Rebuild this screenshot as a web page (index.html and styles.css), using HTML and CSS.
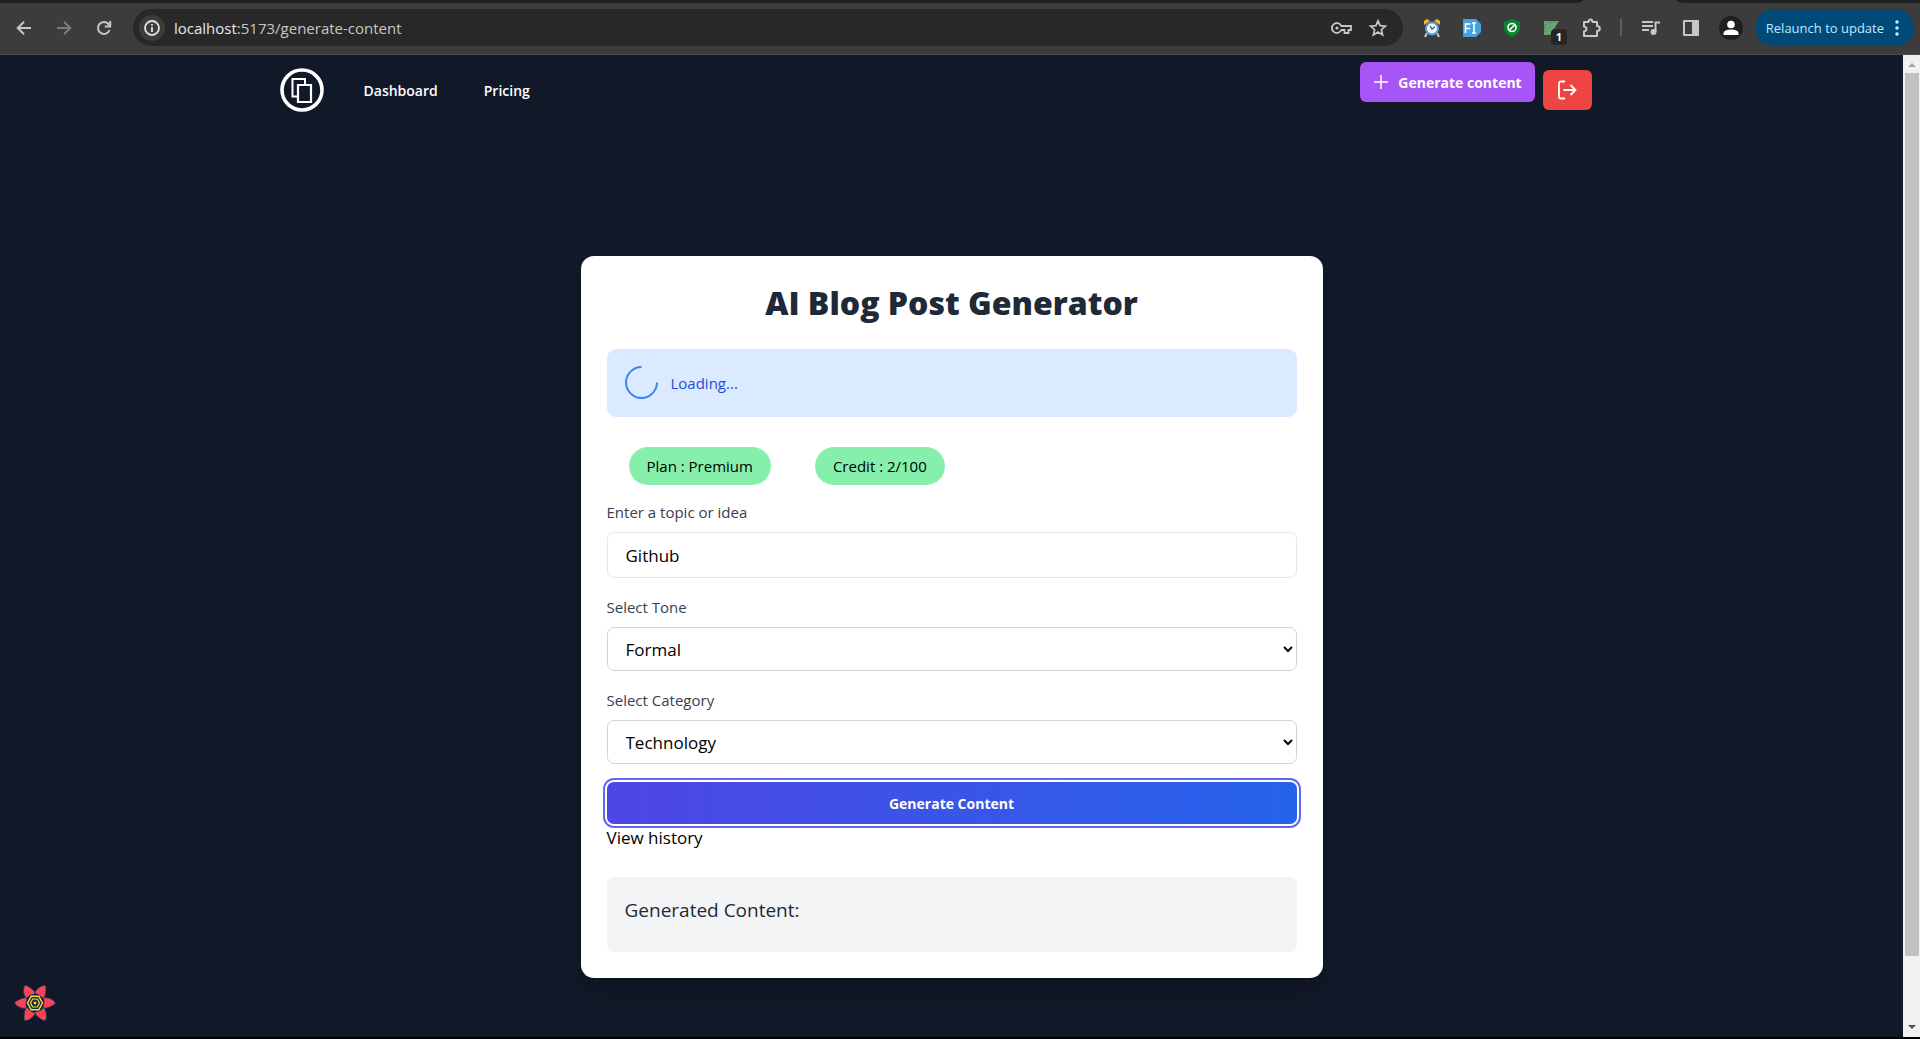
FILE: index.html
```html
<!DOCTYPE html>
<html lang="en">
<head>
<meta charset="utf-8">
<title>AI Blog Post Generator</title>
<link rel="stylesheet" href="styles.css">
</head>
<body>
<div class="tabstrip"><span class="tabstrip-left"></span><span class="tabstrip-right"></span></div>
<header class="toolbar">
  <button class="tool" aria-label="Back"><svg width="20" height="20" viewBox="0 0 20 20" fill="none" stroke="#c7c7c7" stroke-width="2"><path d="M17 10H4M10 3.700L3.700 10L10 16.300"/></svg></button>
  <button class="tool" aria-label="Forward"><svg width="20" height="20" viewBox="0 0 20 20" fill="none" stroke="#7c7c7c" stroke-width="2"><path d="M3 10H16M10 3.700L16.300 10L10 16.300"/></svg></button>
  <button class="tool" aria-label="Reload"><svg width="20" height="20" viewBox="0 0 20 20" fill="none" stroke="#c7c7c7" stroke-width="2"><path d="M15.600 12A6 6 0 1 1 14.500 6L16 7.800M16.200 3V8.400H10.800"/></svg></button>
  <div class="omnibox">
    <button class="site-info" aria-label="Site information"><svg width="18" height="18" viewBox="0 0 18 18" fill="none" stroke="#e3e3e3" stroke-width="1.800"><circle cx="9" cy="9" r="7"/><path d="M9 8V13M9 5V6.800"/></svg></button>
    <div class="url"><span class="host">localhost</span>:5173/generate-content</div>
    <button class="tool tool-key" aria-label="Passwords"><svg width="22" height="14" viewBox="0 0 22 14" fill="none" stroke="#c7c7c7" stroke-width="1.800"><path d="M10.300 5A4.900 4.900 0 1 0 10.300 9H13.500V12H17.500V9H20V5Z"/><circle cx="6" cy="7" r="1.600" fill="#c7c7c7" stroke="none"/></svg></button>
    <button class="tool" aria-label="Bookmark"><svg width="20" height="20" viewBox="0 0 20 20" fill="none" stroke="#c7c7c7" stroke-width="1.700"><path d="M10 2.800L12.100 7.700L17.400 8.200L13.400 11.700L14.600 16.900L10 14.100L5.400 16.900L6.600 11.700L2.600 8.200L7.900 7.700Z"/></svg></button>
  </div>
  <div class="extensions">
    <button class="tool" aria-label="Alarm clock"><svg width="20" height="20" viewBox="0 0 20 20"><path d="M5 15L3 19M15 15L17 19" stroke="#c9ccd0" stroke-width="2"/><path d="M2 7L2 3L5 1L8 3ZM18 7V3L15 1L12 3Z" fill="#f6b62d"/><circle cx="10" cy="10.500" r="7" fill="#5e9bd8"/><circle cx="10" cy="10.500" r="5" fill="#eef6ff"/><path d="M8 8L10 11L13 9" stroke="#4a5462" stroke-width="1.300" fill="none"/></svg></button>
    <button class="tool" aria-label="Form filler"><svg width="20" height="20" viewBox="0 0 20 20"><path d="M2 1H14L19 6V14L14 19H2Q1 19 1 18V2Q1 1 2 1Z" fill="#43a2e2"/><path d="M3.500 15V6H8.500M3.500 10.500H8M10 5H14M12 5V15M10 15H14" stroke="#fff" stroke-width="1.600" fill="none"/></svg></button>
    <button class="tool" aria-label="Ad blocker"><svg width="20" height="20" viewBox="0 0 20 20"><path d="M10 1L18 4V9Q18 16 10 19Q2 16 2 9V4Z" fill="#06852f"/><circle cx="10" cy="9.500" r="4" fill="none" stroke="#fff" stroke-width="1.600"/><path d="M7.200 12.300L12.800 6.700" stroke="#fff" stroke-width="1.600"/></svg></button>
    <button class="tool tool-badged" aria-label="Page ruler, 1 notice"><svg width="20" height="20" viewBox="0 0 20 20"><path d="M2 3H17L8 17H2Z" fill="#68a373"/><path d="M2 7H4M2 10H4M2 13H4M6 3V5M9 3V5M12 3V5" stroke="#4d8059"/></svg><span class="badge">1</span></button>
    <button class="tool" aria-label="Extensions"><svg width="22" height="20" viewBox="0 0 22 20" fill="none" stroke="#c7c7c7" stroke-width="2" stroke-linejoin="round"><path d="M3 4H7.500Q7.500 1.500 9.500 1.500T11.500 4H16V8Q18.800 8 18.800 10.500T16 13V18H3V13.500Q5.500 13 5.500 11T3 8.500Z"/></svg></button>
    <span class="divider"></span>
    <button class="tool" aria-label="Media controls"><svg width="20" height="20" viewBox="0 0 20 20" fill="none" stroke="#c7c7c7" stroke-width="2"><path d="M1 4H12M1 8H12M1 12H8M14.500 14V4.500H19"/><circle cx="12.500" cy="14" r="3" fill="#c7c7c7" stroke="none"/></svg></button>
    <button class="tool tool-panel" aria-label="Side panel"><svg width="20" height="20" viewBox="0 0 20 20"><path d="M3 2H17Q18 2 18 3V17Q18 18 17 18H3Q2 18 2 17V3Q2 2 3 2ZM4 4V16H11V4Z" fill="#c7c7c7" fill-rule="evenodd"/></svg></button>
    <button class="tool tool-avatar" aria-label="Profile"><svg width="24" height="24" viewBox="0 0 24 24"><circle cx="12" cy="12" r="12" fill="#1f1f1f"/><circle cx="12" cy="8.500" r="3.800" fill="#fff"/><path d="M4.500 19V17Q5 13.500 12 13.500T19.500 17V19Z" fill="#fff"/></svg></button>
  </div>
  <button class="relaunch">Relaunch to update<svg width="6" height="18" viewBox="0 0 6 18" fill="#c2e7ff"><circle cx="3" cy="3" r="1.800"/><circle cx="3" cy="9" r="1.800"/><circle cx="3" cy="15" r="1.800"/></svg></button>
</header>

<div class="viewport">
  <div class="page">
    <nav class="nav">
      <a class="logo" href="#" aria-label="Home"><svg width="44" height="44" viewBox="0 0 44 44" fill="none" stroke="#fff"><circle cx="22" cy="22" r="20" stroke-width="3.600"/><path d="M17 28.500H12.500V11H25V16.500" stroke-width="2"/><path d="M18 17H31V34H18Z" stroke-width="2.200"/></svg></a>
      <div class="nav-links"><a href="#">Dashboard</a><a href="#">Pricing</a></div>
      <div class="nav-actions">
        <button class="btn-new"><svg width="14" height="14" viewBox="0 0 14 14" stroke="#fff" stroke-width="1.500"><path d="M7 0V14M0 7H14"/></svg>Generate content</button>
        <button class="btn-logout" aria-label="Log out"><svg width="20" height="20" viewBox="0 0 20 20" fill="none" stroke="#fff" stroke-width="1.800"><path d="M8 1.500H4Q2 1.500 2 3.500V16.500Q2 18.500 4 18.500H8M6.500 10H18.500M13.500 5L18.500 10L13.500 15"/></svg></button>
      </div>
    </nav>
    <main class="main">
      <section class="card">
        <h1>AI Blog Post Generator</h1>
        <div class="loading" role="status"><span class="spinner"></span>Loading...</div>
        <div class="pills"><span class="pill">Plan : Premium</span><span class="pill">Credit : 2/100</span></div>
        <form class="form">
          <div class="field"><label for="topic">Enter a topic or idea</label><input id="topic" type="text" value="Github"></div>
          <div class="field"><label for="tone">Select Tone</label><select id="tone"><option>Formal</option><option>Informal</option></select></div>
          <div class="field"><label for="category">Select Category</label><select id="category"><option>Technology</option><option>Health</option></select></div>
          <button class="btn-generate" type="button">Generate Content</button>
        </form>
        <a class="history" href="#">View history</a>
        <div class="result"><h2>Generated Content:</h2></div>
      </section>
    </main>
    <button class="devtools" aria-label="Open query devtools">
      <svg width="44" height="44" viewBox="-22 -22 44 44">
        <defs><path id="petal" d="M-7.500 -5.500C-12 -5.500 -17 -3.500 -20.500 -0.500C-19 3.500 -14 5.500 -8.500 5.500Q-10 0 -7.500 -5.500Z"/></defs>
        <g fill="#ff4154" stroke="#00435b" stroke-width="0.800"><use href="#petal"/><use href="#petal" transform="rotate(60)"/><use href="#petal" transform="rotate(120)"/><use href="#petal" transform="rotate(180)"/><use href="#petal" transform="rotate(240)"/><use href="#petal" transform="rotate(300)"/></g>
        <path d="M-3.800 -6.700H3.800L7.500 0L3.800 6.700H-3.800L-7.500 0Z" fill="#162c38" stroke="#ffd94c" stroke-width="1.400"/>
        <path d="M-2.300 -4H2.300L4.500 0L2.300 4H-2.300L-4.500 0Z" fill="none" stroke="#ffd94c" stroke-width="1.200"/>
        <circle r="1.400" fill="#ffd94c"/>
      </svg>
    </button>
  </div>
  <div class="scrollbar" aria-hidden="true"><span class="arrow arrow-up"></span><span class="thumb"></span><span class="arrow arrow-down"></span></div>
</div>
</body>
</html>
```
FILE: styles.css
```css
* { box-sizing: border-box; }
body {
  margin: 0;
  min-height: 100vh;
  display: flex;
  flex-direction: column;
  background: #111827;
  border-bottom: 2px solid #000;
  font-family: "Open Sans", "Noto Sans", sans-serif;
  font-size: 14px;
}
button { border: 0; padding: 0; margin: 0; background: none; font: inherit; color: inherit; }
a { color: inherit; text-decoration: none; }
svg { display: block; flex: none; }

/* browser chrome */
.tabstrip { display: flex; height: 3px; background: #3c3c3c; }
.tabstrip-left { flex: 1; margin-right: 94px; background: #1f2020; border-bottom-right-radius: 8px 3px; }
.tabstrip-right { width: 243px; background: #1f2020; border-bottom-left-radius: 8px 3px; }
.toolbar {
  display: flex;
  align-items: center;
  height: 52px;
  padding: 0 6px 2px 14px;
  background: #3c3c3c;
  border-bottom: 1px solid #4a4a4a;
  color: #c7c7c7;
}
.tool { display: flex; align-items: center; justify-content: center; width: 20px; height: 20px; margin-right: 20px; }
.omnibox {
  flex: 1;
  display: flex;
  align-items: center;
  height: 37px;
  margin-left: -1px;
  padding: 0 15px 0 6px;
  border-radius: 19px;
  background: #282828;
}
.omnibox .tool { margin: 0 0 0 15px; }
.omnibox .tool-key { width: 22px; }
.site-info { display: flex; align-items: center; justify-content: center; width: 26px; height: 26px; border-radius: 50%; background: #3c3c3c; }
.url { flex: 1; margin-left: 9px; font-size: 15px; }
.host { color: #e8e8e8; }
.extensions { display: flex; align-items: center; margin-left: 19px; }
.tool-badged { position: relative; }
.badge {
  position: absolute;
  left: 9px;
  top: 11px;
  width: 16px;
  height: 16px;
  border-radius: 4px;
  background: #262626;
  color: #fff;
  font-size: 11px;
  line-height: 16px;
  font-weight: 700;
}
.divider { width: 2px; height: 17px; margin: 0 19px 0 -2px; background: #5f5f5f; }
.tool-panel { margin-right: 18px; }
.tool-avatar { width: 24px; height: 24px; margin-right: 12px; }
.relaunch {
  display: flex;
  align-items: center;
  gap: 10px;
  height: 37px;
  padding: 0 14px 0 11px;
  border-radius: 19px;
  background: #004a77;
  color: #c2e7ff;
  font-size: 13px;
}

/* viewport and scrollbar */
.viewport { flex: 1; display: flex; }
.page { flex: 1; position: relative; }
.scrollbar { display: flex; flex-direction: column; align-items: center; width: 17px; padding: 8px 1px 8px 2px; background: #f1f1f1; }
.arrow { border: 4px solid transparent; }
.arrow-up { border-top: 0; border-bottom-color: #a3a3a3; margin-bottom: 6px; }
.arrow-down { border-bottom: 0; border-top-color: #505050; }
.thumb { align-self: stretch; flex: 1; margin-bottom: 69px; background: #c1c1c1; }

/* navigation */
.nav {
  display: flex;
  align-items: center;
  max-width: 1344px;
  height: 70px;
  margin: 0 auto;
  padding-right: 32px;
  color: #fff;
  font-weight: 600;
}
.nav-links { display: flex; gap: 46px; margin-left: 40px; }
.nav-actions { display: flex; gap: 8px; align-self: flex-start; margin: 7px 0 0 auto; }
.btn-new, .btn-logout { display: flex; align-items: center; justify-content: center; height: 40px; border-radius: 6px; }
.btn-new { gap: 10px; width: 175px; margin-bottom: 8px; padding-left: 2px; background: #a855f7; font-weight: 700; }
.btn-logout { align-self: flex-end; width: 49px; background: #ef4444; }

/* card */
.main { padding: 131px 26px 59px; }
.card {
  display: flex;
  flex-direction: column;
  max-width: 742px;
  margin: 0 auto;
  padding: 26px;
  border-radius: 13px;
  background: #fff;
  box-shadow: 0 22px 28px -6px rgba(0, 0, 0, 0.1), 0 9px 11px -6px rgba(0, 0, 0, 0.1);
}
h1 { margin: 0 0 26px; color: #1f2937; font-size: 32px; line-height: 41px; font-weight: 800; text-align: center; }
.loading {
  display: flex;
  align-items: center;
  gap: 13px;
  height: 68px;
  padding: 0 18px 1px;
  border-radius: 9px;
  background: #dbeafe;
  color: #1d4ed8;
  font-size: 15px;
  font-weight: 500;
}
.spinner { width: 33px; height: 33px; border: 2px solid #3b82f6; border-top-color: transparent; border-radius: 50%; transform: rotate(45deg); }
.pills { display: flex; gap: 44px; margin: 30px 22px 16px; }
.pill { padding: 0 18px; border-radius: 19px; background: #86efac; color: #000; font-size: 15px; line-height: 38px; font-weight: 500; }
.form { display: flex; flex-direction: column; gap: 18px; }
.field { display: flex; flex-direction: column; gap: 9px; }
label { color: #374151; font-size: 15px; line-height: 22px; font-weight: 500; }
input, select { width: 100%; margin: 0; border-radius: 7px; background: #fff; color: #000; font-family: inherit; font-size: 17px; }
input { height: 46px; padding: 0 18px; border: 1px solid #e5e7eb; }
select { height: 44px; padding: 0 14px; border: 1px solid #d1d5db; }
.btn-generate {
  height: 42px;
  border-radius: 7px;
  background: linear-gradient(to right, #4f46e5, #2563eb);
  box-shadow: 0 0 0 2px #fff, 0 0 0 4px #6366f1;
  color: #fff;
  font-weight: 700;
}
.history { align-self: flex-start; margin-bottom: 25px; color: #000; font-size: 17px; line-height: 28px; }
.result { padding: 18px 18px 27px; border-radius: 7px; background: #f3f4f6; }
h2 { margin: 0; color: #1f2937; font-size: 19px; line-height: 30px; font-weight: 500; }
.devtools { position: absolute; left: 13px; bottom: 12px; }
```
